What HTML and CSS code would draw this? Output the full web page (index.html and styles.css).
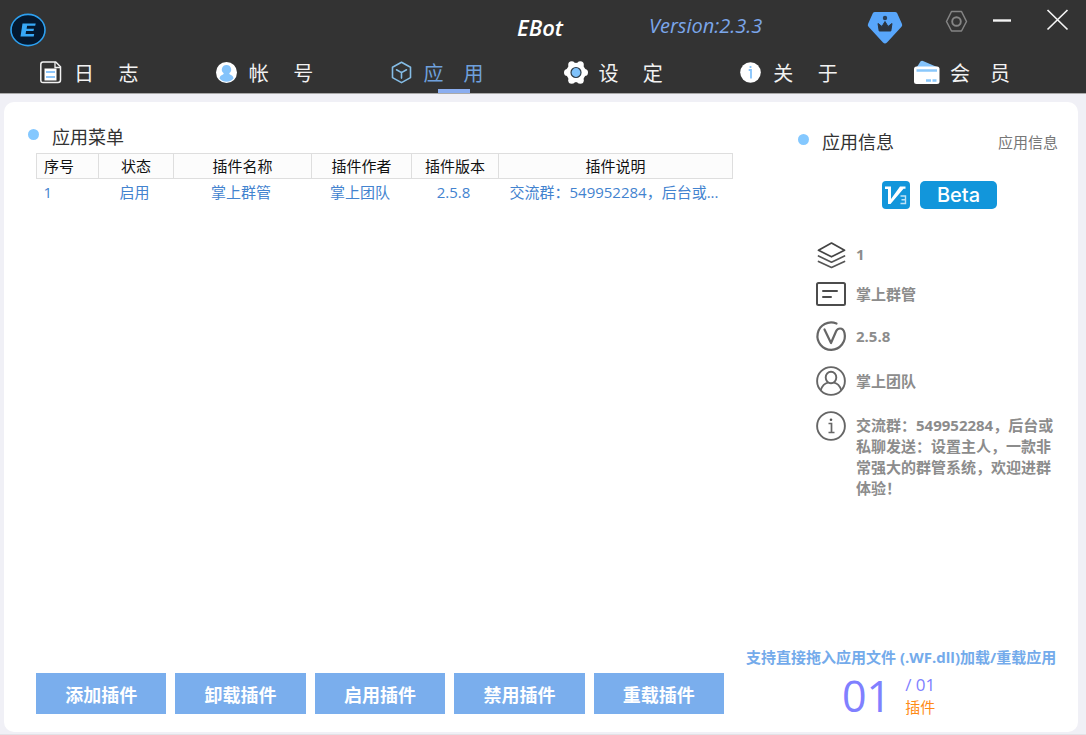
FILE: index.html
```html
<!DOCTYPE html>
<html lang="zh-CN">
<head>
<meta charset="utf-8">
<meta name="viewport" content="width=device-width, initial-scale=1">
<title>EBot</title>
<link rel="stylesheet" href="styles.css">
</head>
<body>
<header class="header">
  <div class="titlebar">
    <svg class="logo" width="36" height="34" viewBox="0 0 36 34" role="img" aria-label="EBot">
      <ellipse cx="18" cy="17" rx="17" ry="15.6" fill="#04182f" stroke="#2da0f0" stroke-width="1.6"/>
      <path d="M12.5 10.500h13.2l-.5 2.200h-8.100l-.5 3h7.400l-.5 2.400h-7.400l-.5 2.800h8.600l-.5 2.500H10.500z" fill="#37a8f7"/>
    </svg>
    <h1 class="brand">EBot</h1>
    <div class="titlebar-end">
      <span class="version">Version:2.3.3</span>
      <div class="window-tools">
        <button class="tool" aria-label="会员">
          <svg width="36" height="34" viewBox="0 0 36 34">
            <path d="M8 1h20q1.500 0 2.200 1.300L35 13q.6 1.600-.5 2.800L20 31.500q-2 2.200-4 0L1.500 15.800Q.4 14.600 1 13L5.800 2.300Q6.500 1 8 1z" fill="#58a6fb"/>
            <circle cx="18" cy="7" r="2.200" fill="#2b4059"/>
            <path d="M11 12.500l4 3 3-5 3 5 4-3-1.200 7.500H12.200z" fill="#2b3440" stroke="#2b3440" stroke-linejoin="round"/>
          </svg>
        </button>
        <button class="tool" aria-label="设置">
          <svg width="24" height="24" viewBox="0 0 24 24" fill="none" stroke="#858585" stroke-width="1.500" stroke-linejoin="round">
            <path d="M7.500 2.500h10L22.500 12.500l-5 9.500h-10L2.500 12.500z"/>
            <circle cx="12.500" cy="12.500" r="4.300" stroke-width="1.900"/>
          </svg>
        </button>
        <button class="tool" aria-label="最小化">
          <svg width="20" height="24" viewBox="0 0 20 24"><path d="M1 11.500h18" stroke="#f4f4f4" stroke-width="2.400"/></svg>
        </button>
        <button class="tool" aria-label="关闭">
          <svg width="24" height="24" viewBox="0 0 24 24"><path d="M1.500 1l20 19.500M21.500 1L1.500 20.500" stroke="#f4f4f4" stroke-width="1.700"/></svg>
        </button>
      </div>
    </div>
  </div>
  <nav class="nav">
    <a class="nav-item" href="#log">
      <svg width="24" height="26" viewBox="0 0 24 26" fill="none">
        <path d="M3 2h12.700L20.500 6.800V20q0 2.500-2.500 2.500H3Q.8 22.500.8 20V4.500Q.8 2 3 2z" stroke="#f2f2f2" stroke-width="1.500"/>
        <path d="M15 2v5.500h5.500" stroke="#f2f2f2" stroke-width="1.300"/>
        <path d="M4.500 8.500h12v12h-12z" fill="#fff"/>
        <path d="M6 12h9M6 17h9" stroke="#8dc6fb" stroke-width="2.200"/>
      </svg>
      <span class="nav-label">日　 志</span>
    </a>
    <a class="nav-item" href="#account">
      <svg width="24" height="26" viewBox="0 0 24 26">
        <circle cx="11.500" cy="12.500" r="10.500" fill="#fff"/>
        <path d="M11.500 5a4.500 4.500 0 0 1 3 8q-.7.900.5 1.500 3.300 1 3.500 4-3 3.300-7 3.300t-7-3.300q.2-3 3.500-4 1.200-.6.500-1.500a4.500 4.500 0 0 1 3-8z" fill="#84c3fb"/>
      </svg>
      <span class="nav-label">帐　 号</span>
    </a>
    <a class="nav-item nav-item-active" href="#apps" aria-current="page">
      <svg width="24" height="26" viewBox="0 0 24 26" fill="none" stroke="#85bde6" stroke-width="1.600" stroke-linejoin="round" stroke-linecap="round">
        <path d="M11.500 2.200l9 5v10.400l-9 5-9-5V7.200z"/>
        <path d="M6.500 9.800l5 2.800 5-2.800M11.500 12.600v5.500"/>
      </svg>
      <span class="nav-label">应　用</span>
    </a>
    <a class="nav-item" href="#settings">
      <svg width="24" height="26" viewBox="1 0 24 26">
        <g fill="#fff"><circle cx="13" cy="12.500" r="9.800"/><circle cx="21.500" cy="12.500" r="3.500"/><circle cx="17.300" cy="4.700" r="3.500"/><circle cx="8.700" cy="4.700" r="3.500"/><circle cx="4.500" cy="12.500" r="3.500"/><circle cx="8.700" cy="20.300" r="3.500"/><circle cx="17.300" cy="20.300" r="3.500"/></g>
        <circle cx="13" cy="12.500" r="5" fill="#7fc2fb" stroke="#2e3c48" stroke-width="1.200"/>
      </svg>
      <span class="nav-label">设　 定</span>
    </a>
    <a class="nav-item" href="#about">
      <svg width="24" height="26" viewBox="0 0 24 26">
        <circle cx="11.500" cy="12.500" r="10.300" fill="#fff"/>
        <path d="M9.700 10h2.300v8.500M11.500 6v2" fill="none" stroke="#84c3fb" stroke-width="1.800"/>
      </svg>
      <span class="nav-label">关　 于</span>
    </a>
    <a class="nav-item" href="#member">
      <svg width="26" height="26" viewBox="1 0 26 26">
        <path d="M2 10L7.500 1.500Q8.500.3 10 .9L24 7v4z" fill="#84c3fb"/>
        <rect x="1" y="6.500" width="25.500" height="17.500" rx="2.500" fill="#fff"/>
        <path d="M3.500 10.500h20.500M13 20.500h5M19.500 20.500h4" stroke="#8ac8fb" stroke-width="2.400"/>
      </svg>
      <span class="nav-label">会　员</span>
    </a>
  </nav>
</header>

<main class="panel">
  <section class="apps">
    <h2 class="heading">应用菜单</h2>
    <table class="table">
      <colgroup><col class="col-id"><col class="col-state"><col class="col-name"><col class="col-author"><col class="col-version"><col></colgroup>
      <thead>
        <tr><th scope="col">序号</th><th scope="col">状态</th><th scope="col">插件名称</th><th scope="col">插件作者</th><th scope="col">插件版本</th><th scope="col">插件说明</th></tr>
      </thead>
      <tbody>
        <tr><td>1</td><td>启用</td><td>掌上群管</td><td>掌上团队</td><td>2.5.8</td><td>交流群：549952284，后台或...</td></tr>
      </tbody>
    </table>
    <div class="actions">
      <button class="action">添加插件</button>
      <button class="action">卸载插件</button>
      <button class="action">启用插件</button>
      <button class="action">禁用插件</button>
      <button class="action">重载插件</button>
    </div>
  </section>

  <aside class="info">
    <div class="info-head">
      <h2 class="heading">应用信息</h2>
      <span class="info-note">应用信息</span>
    </div>
    <div class="badges">
      <svg width="28" height="28" viewBox="0 0 28 28" role="img" aria-label="V3">
        <rect width="28" height="28" rx="4" fill="#1296db"/>
        <path d="M3 5.500h6V18L18 5.500h5.500v2.200h-2L8.500 23H6V8H3z" fill="#fff"/>
        <path d="M18.500 15h5v7.500h-5M19.500 18.700h4" fill="none" stroke="#bfe2f6" stroke-width="1.400"/>
      </svg>
      <span class="beta">Beta</span>
    </div>
    <ul class="details">
      <li class="detail">
        <svg width="30" height="26" viewBox="0 0 30 26" fill="none" stroke="#444" stroke-width="1.700" stroke-linejoin="round" stroke-linecap="round">
          <path d="M15.500 2L28.500 9.300l-13 6.500-13-6.500z"/><path d="M2.500 15l13 6.200 13-6.200M2.500 20.500l13 6 13-6" stroke="#555"/>
        </svg>
        <span>1</span>
      </li>
      <li class="detail">
        <svg width="30" height="24" viewBox="0 0 30 24" fill="none" stroke="#4c4c4c" stroke-width="2">
          <rect x="1" y="1" width="28" height="22" rx="1.500"/><path d="M7 9h14M7 15h8" stroke-linecap="round"/>
        </svg>
        <span>掌上群管</span>
      </li>
      <li class="detail">
        <svg width="30" height="30" viewBox="0 0 30 30" fill="none" stroke="#666" stroke-width="2.200" stroke-linecap="round" stroke-linejoin="round">
          <path d="M20.500 2.500A13.700 13.700 0 1 0 28.500 12Q27.500 7.500 24 7.500 21.500 7.500 20.200 10l-5.200 12L8.500 8.500"/>
        </svg>
        <span>2.5.8</span>
      </li>
      <li class="detail">
        <svg width="30" height="30" viewBox="0 0 30 30" fill="none" stroke="#666" stroke-width="1.900">
          <circle cx="15" cy="15" r="13.900"/><ellipse cx="15" cy="11.500" rx="5.300" ry="5.700"/><path d="M4.800 24Q7 17.500 12 16.600M25.200 24Q23 17.500 18 16.600"/>
        </svg>
        <span>掌上团队</span>
      </li>
      <li class="detail detail-long">
        <svg width="30" height="30" viewBox="0 0 30 30" fill="none" stroke="#666" stroke-width="1.900">
          <circle cx="15" cy="15" r="13.900"/><path d="M12.500 12.500h3v9M12.500 21.500h6" stroke-width="1.700"/><circle cx="15" cy="8.700" r="1.300" fill="#555" stroke="none"/>
        </svg>
        <p class="description">交流群：549952284，后台或私聊发送：设置主人，一款非常强大的群管系统，欢迎进群体验！</p>
      </li>
    </ul>
    <div class="summary">
      <p class="hint">支持直接拖入应用文件 (.WF.dll)加载/重载应用</p>
      <div class="counter">
        <span class="counter-current">01</span>
        <div class="counter-side">
          <span class="counter-total">/ 01</span>
          <span class="counter-unit">插件</span>
        </div>
      </div>
    </div>
  </aside>
</main>
</body>
</html>
```
FILE: styles.css
```css
* {
  box-sizing: border-box;
}

body {
  margin: 0;
  min-height: 100vh;
  display: flex;
  flex-direction: column;
  background: #f0f0f6;
  border-bottom: 1px solid #e2e2e6;
  font-family: "Open Sans", "Noto Sans CJK SC", sans-serif;
  font-size: 15px;
}

h1, h2, p, ul {
  margin: 0;
  padding: 0;
}

button {
  border: 0;
  padding: 0;
  background: none;
  font: inherit;
  cursor: pointer;
}

svg {
  display: block;
  flex: none;
  overflow: visible;
}

/* Header */
.header {
  background: #333;
  border-bottom: 1px solid #aaa;
}

.titlebar {
  display: grid;
  grid-template-columns: 1fr auto 1fr;
  height: 52px;
  padding: 0 16px 0 10px;
}

.logo {
  margin-top: 13px;
}

.brand {
  padding-top: 14px;
  color: #fff;
  font-size: 22px;
  line-height: 26px;
  font-weight: 600;
  font-style: italic;
}

.titlebar-end {
  display: flex;
  justify-content: space-between;
  padding-left: 86px;
}

.version {
  padding-top: 13px;
  color: #7ba6ea;
  font-size: 20px;
  line-height: 26px;
  font-style: italic;
}

.window-tools {
  display: flex;
  align-items: flex-start;
  padding-top: 9px;
}

.tool {
  margin-left: 24px;
}

.tool:nth-child(1) {
  margin-top: 2px;
}

.tool:nth-child(2) {
  margin-left: 41px;
}

.tool:nth-child(4) {
  margin: 0 0 0 34px;
}

/* Navigation */
.nav {
  display: grid;
  grid-template-columns: repeat(5, 1fr) 172px;
  height: 41px;
  padding-left: 40px;
}

.nav-item {
  display: flex;
  align-items: center;
  gap: 10px;
  color: #f2f2f2;
  text-decoration: none;
}

.nav-label {
  position: relative;
  font-family: "Noto Sans CJK SC", sans-serif;
  font-size: 20px;
  line-height: 41px;
  font-weight: 400;
  white-space: pre;
}

.nav-item-active {
  color: #6fa0dc;
}

.nav-item-active .nav-label::after {
  content: "";
  position: absolute;
  left: 50%;
  bottom: 0;
  width: 32px;
  height: 4px;
  margin-left: -16px;
  background: #8baef0;
}

/* Content panel */
.panel {
  flex: 1;
  display: grid;
  grid-template-columns: minmax(0, 1fr) 318px;
  gap: 13px;
  margin: 8px 8px 2px 4px;
  padding: 0 14px 18px 24px;
  background: #fff;
  border-radius: 10px;
}

.heading {
  display: flex;
  color: #333;
  font-size: 18px;
  line-height: 24px;
  font-weight: 400;
}

.heading::before {
  content: "";
  width: 11px;
  height: 11px;
  margin: 4px 13px 0 0;
  border-radius: 50%;
  background: #84c8ff;
}

.apps {
  display: flex;
  flex-direction: column;
  padding: 23px 0 0 8px;
}

.apps .heading {
  margin: 0 0 4px -8px;
}

.table {
  width: 100%;
  table-layout: fixed;
  border-collapse: collapse;
  line-height: 24px;
  text-align: center;
}

.col-id { width: 62px; }
.col-state { width: 75px; }
.col-name { width: 138px; }
.col-author { width: 100px; }
.col-version { width: 87px; }

.table th {
  padding: 0;
  border: 1px solid #dedede;
  background: #fcfcfc;
  color: #111;
  font-weight: 400;
}

.table td {
  padding: 1px 3px 1px 0;
  color: #4383cf;
  white-space: nowrap;
}

.table th:first-child,
.table td:first-child {
  padding-left: 7px;
  text-align: left;
}

.actions {
  display: grid;
  grid-template-columns: repeat(5, 1fr);
  gap: 9px;
  margin-top: auto;
  padding-right: 9px;
}

.action {
  height: 41px;
  background: #7aaeed;
  color: #fff;
  font-size: 18px;
  font-weight: 700;
}

/* Plugin details */
.info {
  display: flex;
  flex-direction: column;
  padding-top: 28px;
}

.info-head {
  display: flex;
  justify-content: space-between;
  padding: 0 6px 0 52px;
}

.info-note {
  color: #777;
  line-height: 24px;
}

.badges {
  display: flex;
  gap: 10px;
  margin: 27px 0 32px 136px;
}

.beta {
  width: 77px;
  border-radius: 5px;
  background: #1296db;
  color: #fff;
  font-family: Inter, sans-serif;
  font-size: 20px;
  line-height: 28px;
  font-weight: 500;
  text-align: center;
}

.details {
  display: flex;
  flex-direction: column;
  gap: 15px;
  padding-left: 70px;
  list-style: none;
}

.detail {
  display: flex;
  align-items: center;
  gap: 10px;
  color: #8c8c8c;
  line-height: 21px;
  font-weight: 700;
}

.detail-long {
  align-items: flex-start;
}

.description {
  padding: 4px 4px 0 0;
}

.summary {
  margin-top: auto;
}

.hint {
  margin-bottom: 4px;
  color: #74abeb;
  line-height: 22px;
  font-weight: 700;
  white-space: nowrap;
}

.counter {
  display: flex;
  align-items: center;
  gap: 14px;
  margin-bottom: -6px;
  padding-left: 96px;
}

.counter-current {
  color: #8080ff;
  font-size: 43px;
  line-height: 48px;
}

.counter-side {
  display: flex;
  flex-direction: column;
  line-height: 22px;
}

.counter-total {
  color: #8080ff;
  font-size: 17px;
}

.counter-unit {
  color: #ff8a14;
}
```
